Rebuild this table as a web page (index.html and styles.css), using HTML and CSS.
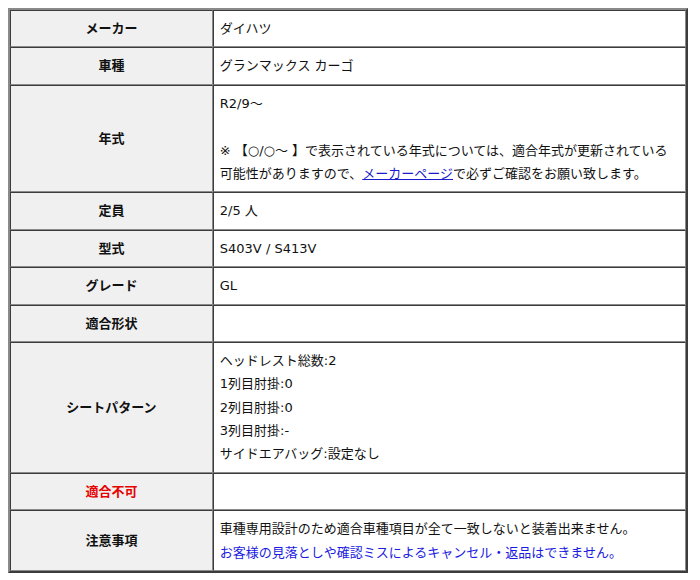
FILE: index.html
```html
<!DOCTYPE html>
<html lang="ja">
<head>
<meta charset="utf-8">
<link rel="stylesheet" href="styles.css">
</head>
<body>
<table class="spec">
  <tr><th class="label">メーカー</th><td class="value">ダイハツ</td></tr>
  <tr><th class="label">車種</th><td class="value">グランマックス カーゴ</td></tr>
  <tr><th class="label">年式</th><td class="value">R2/9～<br><br>※ 【○/○～ 】で表示されている年式については、適合年式が更新されている<br>可能性がありますので、<a class="link" href="#">メーカーページ</a>で必ずご確認をお願い致します。</td></tr>
  <tr><th class="label">定員</th><td class="value">2/5 人</td></tr>
  <tr><th class="label">型式</th><td class="value">S403V / S413V</td></tr>
  <tr><th class="label">グレード</th><td class="value">GL</td></tr>
  <tr><th class="label">適合形状</th><td class="value"></td></tr>
  <tr><th class="label">シートパターン</th><td class="value">ヘッドレスト総数:2<br>1列目肘掛:0<br>2列目肘掛:0<br>3列目肘掛:-<br>サイドエアバッグ:設定なし</td></tr>
  <tr><th class="label alert">適合不可</th><td class="value"></td></tr>
  <tr><th class="label">注意事項</th><td class="value">車種専用設計のため適合車種項目が全て一致しないと装着出来ません。<br><span class="notice">お客様の見落としや確認ミスによるキャンセル・返品はできません。</span></td></tr>
</table>
</body>
</html>
```
FILE: styles.css
```css
html, body {
  margin: 0;
  background: #ffffff;
}
body {
  padding: 8px;
  font-family: "DejaVu Sans", "Noto Sans CJK JP", sans-serif;
  font-size: 13px;
  line-height: 1.8;
  color: #111;
}
.spec {
  width: 680px;
  border-collapse: separate;
  border-spacing: 0;
  border: 2px solid;
  border-color: #8a8a8a #3c3c3c #3c3c3c #8a8a8a;
}
.label,
.value {
  border: 1px solid;
  border-color: #3c3c3c #8a8a8a #8a8a8a #3c3c3c;
  padding: 6px;
  vertical-align: middle;
}
.label {
  width: 30%;
  background: #f0f0f0;
  font-weight: bold;
  text-align: center;
  color: #111;
}
.value {
  text-align: left;
  background: #ffffff;
}
.alert {
  color: #e60000;
}
.link {
  color: #1a1acc;
  text-decoration: underline;
}
.notice {
  color: #1a1ae0;
}
```
